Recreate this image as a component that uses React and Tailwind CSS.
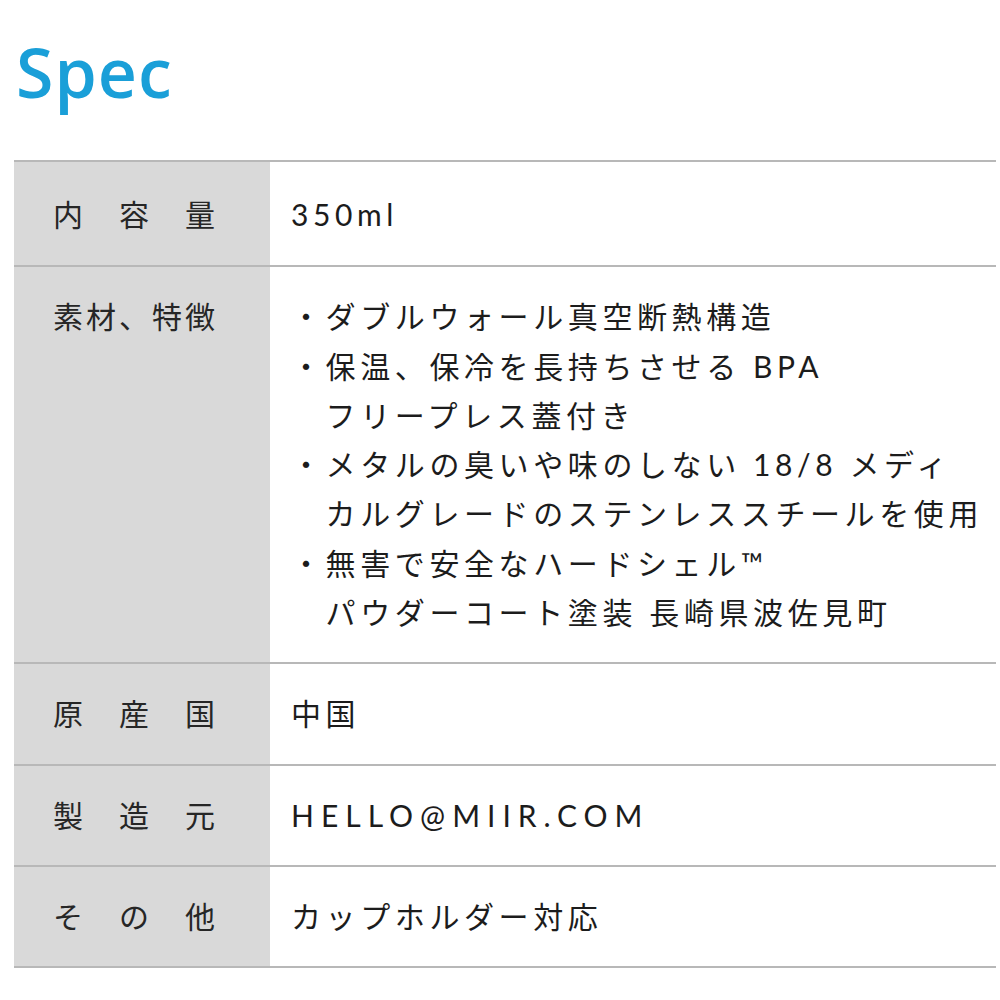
const rows = [
  { label: '内　容　量', lines: ['350ml'], first: true },
  {
    label: '素材、特徴',
    lines: [
      '・ダブルウォール真空断熱構造',
      '・保温、保冷を長持ちさせる BPA',
      '　フリープレス蓋付き',
      '・メタルの臭いや味のしない 18/8 メディ',
      '　カルグレードのステンレススチールを使用',
      '・無害で安全なハードシェル™',
      '　パウダーコート塗装 長崎県波佐見町',
    ],
  },
  { label: '原　産　国', lines: ['中国'] },
  { label: '製　造　元', lines: ['HELLO@MIIR.COM'], wide: true },
  { label: 'そ　の　他', lines: ['カップホルダー対応'] },
];

export default function App() {
  return (
    <div className="w-[1000px] h-[1000px] bg-white pt-[32px]" style={{ fontFamily: '"Lato", "Noto Sans CJK JP", sans-serif' }}>
      <h1
        className="pl-[16px] text-[68px] leading-[80px] font-semibold tracking-[1px] text-[#1a9fd8]"
        style={{ fontFamily: '"Open Sans", sans-serif' }}
      >
        Spec
      </h1>

      <div className="mt-[48px] ml-[14px] mr-[4px] border-t-2 border-[#b8b8b8]">
        {rows.map((row) => (
          <div key={row.label} className="flex border-b-2 border-[#b8b8b8]">
            <div
              className={
                'w-[256px] shrink-0 bg-[#d9d9d9] pl-[39px] text-[30px] leading-[49.3px] tracking-[3px] text-[#262626] ' +
                (row.first ? 'pt-[28px] pb-[26px]' : 'py-[25px]')
              }
            >
              {row.label}
            </div>
            <div
              className={
                'flex-1 pl-[21px] text-[30px] leading-[49.3px] text-[#1c1c1c] whitespace-pre ' +
                (row.first ? 'pt-[28px] pb-[26px] ' : 'py-[25px] ') +
                (row.wide ? 'tracking-[7px]' : 'tracking-[4.6px]')
              }
            >
              {row.lines.map((line) => (
                <div key={line}>{line}</div>
              ))}
            </div>
          </div>
        ))}
      </div>
    </div>
  );
}
